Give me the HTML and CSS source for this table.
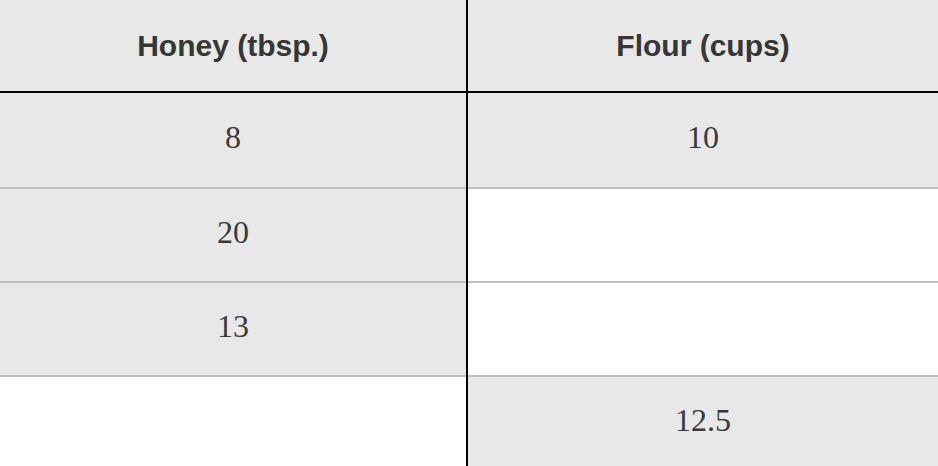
FILE: index.html
```html
<!DOCTYPE html>
<html>
<head>
<meta charset="utf-8">
<link rel="stylesheet" href="styles.css">
</head>
<body>
<div class="table">
  <div class="cell head left shade row1">Honey (tbsp.)</div>
  <div class="cell head right shade row1">Flour (cups)</div>
  <div class="rule dark row2"></div>

  <div class="cell num left shade row3">8</div>
  <div class="cell num right shade row3">10</div>
  <div class="rule row4"></div>

  <div class="cell num left shade row5">20</div>
  <div class="cell num right row5"></div>
  <div class="rule row6"></div>

  <div class="cell num left shade row7">13</div>
  <div class="cell num right row7"></div>
  <div class="rule row8"></div>

  <div class="cell num left row9"></div>
  <div class="cell num right shade row9">12.5</div>

  <div class="divider"></div>
</div>
</body>
</html>
```

FILE: styles.css
```css
html, body {
  margin: 0;
  padding: 0;
  background: #ffffff;
}
body {
  width: 938px;
  height: 466px;
  overflow: hidden;
}
.table {
  display: grid;
  grid-template-columns: 466px 2px 470px;
  grid-template-rows: 91px 2px 94px 2px 92px 2px 92px 2px 89px;
}
.row1 { grid-row: 1; }
.row2 { grid-row: 2; }
.row3 { grid-row: 3; }
.row4 { grid-row: 4; }
.row5 { grid-row: 5; }
.row6 { grid-row: 6; }
.row7 { grid-row: 7; }
.row8 { grid-row: 8; }
.row9 { grid-row: 9; }
.cell {
  display: flex;
  align-items: center;
  justify-content: center;
  background: #ffffff;
  color: #333333;
}
.left { grid-column: 1; }
.right { grid-column: 3; }
.shade { background: #e8e8e8; }
.head {
  font-family: "Liberation Sans", Arial, sans-serif;
  font-weight: bold;
  font-size: 30px;
  line-height: 1;
  color: #363636;
}
.num {
  font-family: "Liberation Serif", "Times New Roman", serif;
  font-size: 32px;
  line-height: 1;
  padding-bottom: 7px;
  box-sizing: border-box;
  color: #3a3a3a;
}
.row9.num { padding-bottom: 4px; }
.rule {
  grid-column: 1 / -1;
  background: #c0c0c0;
}
.rule.dark { background: #000000; }
.divider {
  grid-column: 2;
  grid-row: 1 / -1;
  background: #000000;
}
```
